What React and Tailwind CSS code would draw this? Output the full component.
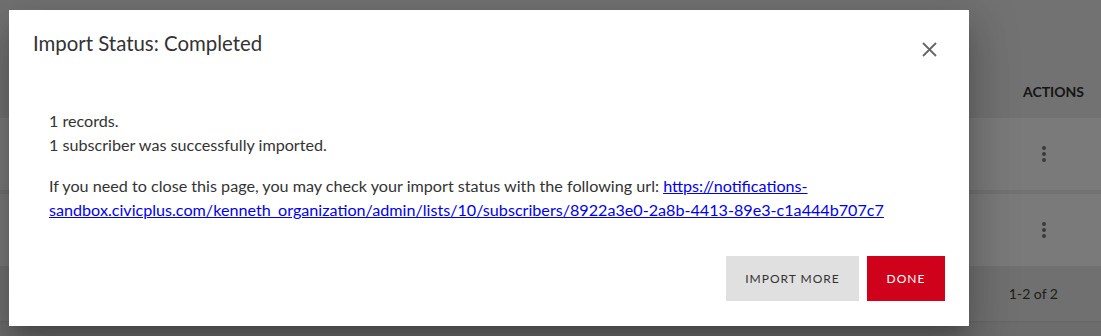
import React from "react";

const Kebab = () => (
  <svg width="6" height="18" viewBox="0 0 6 18" className="fill-[#3a3a3a]">
    <circle cx="3" cy="3" r="2" />
    <circle cx="3" cy="9" r="2" />
    <circle cx="3" cy="15" r="2" />
  </svg>
);

export default function App() {
  return (
    <div className="relative w-[1101px] h-[336px] overflow-hidden bg-[#6c6c6c] font-['Lato','Open_Sans',sans-serif]">
      {/* table behind the overlay */}
      <div className="flex flex-col">
        <div className="h-[118px] bg-[#727272] flex items-end justify-end pb-[16px] pr-[17px]">
          <span className="text-[14px] font-bold text-[#141414]">ACTIONS</span>
        </div>
        <div className="h-[72px] bg-[#7a7a7a] flex items-center justify-end pr-[54px]">
          <Kebab />
        </div>
        <div className="h-[4px] bg-[#727272]" />
        <div className="h-[72px] bg-[#7a7a7a] flex items-center justify-end pr-[54px]">
          <Kebab />
        </div>
        <div className="h-[56px] bg-[#707070] flex items-center justify-end pr-[43px] border-b border-[#666]">
          <span className="text-[14px] text-[#1c1c1c]">1-2 of 2</span>
        </div>
      </div>

      {/* dialog */}
      <div className="absolute left-[9px] top-[10px] w-[960px] h-[316px] bg-white shadow-[0_11px_15px_-7px_rgba(0,0,0,0.2),0_24px_38px_3px_rgba(0,0,0,0.14),0_9px_46px_8px_rgba(0,0,0,0.12)] flex flex-col">
        <div className="flex items-start justify-between pl-[24px] pr-[32px] pt-[21px]">
          <h2 className="text-[20.4px] leading-[24px] text-[#333]">Import Status: Completed</h2>
          <button className="mt-[11px] text-[#666]">
            <svg width="15" height="15" viewBox="0 0 15 15" stroke="currentColor" strokeWidth="1.8">
              <path d="M1 1L14 14M14 1L1 14" />
            </svg>
          </button>
        </div>
        <div className="pl-[40px] pr-[24px] pt-[52px] text-[16.15px] leading-[24px] text-[#333]">
          <p>1 records.</p>
          <p>1 subscriber was successfully imported.</p>
          <p className="mt-[17px]">
            If you need to close this page, you may check your import status with the following url:{" "}
            <a href="#" className="text-[#0000ee] underline">
              https://notifications-sandbox.civicplus.com/kenneth_organization/admin/lists/10/subscribers/8922a3e0-2a8b-4413-89e3-c1a444b707c7
            </a>
          </p>
        </div>
        <div className="mt-auto flex justify-end gap-[8px] pr-[24px] pb-[25px]">
          <button className="h-[45px] w-[133px] bg-[#e0e0e0] text-[12px] tracking-[1px] text-[#333]">IMPORT MORE</button>
          <button className="h-[45px] w-[78px] bg-[#d0021b] text-[12px] tracking-[1px] text-white">DONE</button>
        </div>
      </div>
    </div>
  );
}
